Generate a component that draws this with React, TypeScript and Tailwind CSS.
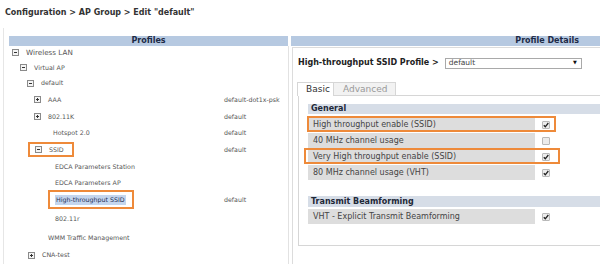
import React from "react";

type TreeRow = {
  label: string;
  h: string;
  pl: string;
  icon?: "minus" | "plus";
  value?: string;
  selected?: boolean;
  box?: string;
};

const rows: TreeRow[] = [
  { label: "Wireless LAN", h: "h-[14px]", pl: "pl-[3px]", icon: "minus" },
  { label: "Virtual AP", h: "h-[15px]", pl: "pl-[11px]", icon: "minus" },
  { label: "default", h: "h-[16px]", pl: "pl-[18px]", icon: "minus" },
  { label: "AAA", h: "h-[17px]", pl: "pl-[25px]", icon: "plus", value: "default-dot1x-psk" },
  { label: "802.11K", h: "h-[17px]", pl: "pl-[25px]", icon: "plus", value: "default" },
  { label: "Hotspot 2.0", h: "h-[16px]", pl: "pl-[44px]", value: "default" },
  {
    label: "SSID",
    h: "h-[17px]",
    pl: "pl-[26px]",
    icon: "minus",
    value: "default",
    box: "left-[19px] top-[1px] w-[46px] h-[15px]",
  },
  { label: "EDCA Parameters Station", h: "h-[17px]", pl: "pl-[46px]" },
  { label: "EDCA Parameters AP", h: "h-[16px]", pl: "pl-[46px]" },
  {
    label: "High-throughput SSID",
    h: "h-[18px]",
    pl: "pl-[46px]",
    value: "default",
    selected: true,
    box: "left-[39px] top-[-1px] w-[86px] h-[19px]",
  },
  { label: "802.11r", h: "h-[20px]", pl: "pl-[46px]" },
  { label: "WMM Traffic Management", h: "h-[18px]", pl: "pl-[39px]" },
  { label: "CNA-test", h: "h-[16px]", pl: "pl-[19px]", icon: "plus" },
];

function TreeIcon({ kind }: { kind: "minus" | "plus" }) {
  return (
    <span className="relative inline-block w-[7px] h-[7px] border border-[#8a8a8a] bg-[#f4f4f4] mr-[7px] shrink-0">
      <span className="absolute left-[1px] top-[2px] w-[3px] h-px bg-[#333]" />
      {kind === "plus" && <span className="absolute left-[2px] top-[1px] w-px h-[3px] bg-[#333]" />}
    </span>
  );
}

function Check({ checked }: { checked: boolean }) {
  return (
    <span className="inline-flex items-center justify-center w-[8px] h-[8px] border border-[#b9b9b9] bg-[#ececec] rounded-[1px]">
      {checked && (
        <svg width="6" height="6" viewBox="0 0 6 6">
          <path d="M0.8 3.2 L2.3 4.8 L5.3 1" stroke="#222" strokeWidth="1.3" fill="none" />
        </svg>
      )}
    </span>
  );
}

function DetailRow({
  label,
  checked,
  box,
}: {
  label: string;
  checked: boolean;
  box?: string;
}) {
  return (
    <div className="relative flex items-center h-[15px] mb-px">
      <div className="w-[227px] h-full bg-[#dddddd] pl-[5px] flex items-center text-[8px] text-[#444] whitespace-nowrap">
        {label}
      </div>
      <div className="ml-[7px] flex items-center">
        <Check checked={checked} />
      </div>
      {box && <div className={`absolute border-2 border-[#ee8a3a] ${box}`} />}
    </div>
  );
}

export default function App() {
  return (
    <div className="w-[600px] h-[264px] bg-white overflow-hidden font-['DejaVu_Sans',sans-serif]">
      <div className="h-[28px] pl-[5px] pt-[7px] text-[8px] font-bold text-[#333] leading-[12px]">
        Configuration &gt; AP Group &gt; Edit "default"
      </div>
      <div className="ml-[3px] border-l border-[#e6e6e6] pl-[5px] pt-[8px] flex h-[236px]">
        {/* Left: Profiles tree */}
        <div className="w-[280px] shrink-0 flex flex-col">
          <div className="h-[10px] mr-[1px] bg-[#b6c9e1] text-[8px] font-bold text-[#1d2b47] leading-[10px] text-center">
            Profiles
          </div>
          <div className="flex-1 border-r border-[#e2e2e2] text-[6.3px] text-[#555]">
            {rows.map((r) => (
              <div key={r.label} className={`relative flex items-center ${r.h}`}>
                <div className={`w-[215px] shrink-0 flex items-center ${r.pl}`}>
                  {r.icon && <TreeIcon kind={r.icon} />}
                  <span
                    className={
                      r.selected
                        ? "bg-[#c4d6ee] text-[#1f2f55] px-px"
                        : r.label === "Wireless LAN"
                        ? "text-[7.2px]"
                        : ""
                    }
                  >
                    {r.label}
                  </span>
                </div>
                {r.value && <span>{r.value}</span>}
                {r.box && <div className={`absolute border-2 border-[#ee8a3a] ${r.box}`} />}
              </div>
            ))}
          </div>
        </div>

        {/* Right: Profile details */}
        <div className="flex-1 ml-[2px] flex flex-col min-w-0">
          <div className="h-[10px] bg-[#b6c9e1] text-[8px] font-bold text-[#1d2b47] leading-[10px] text-right pr-[21px]">
            Profile Details
          </div>
          <div className="flex-1 ml-px mt-px border-l border-t border-[#dcdcdc] pl-[5px]">
            <div className="mt-[10px] flex items-center h-[10px]">
              <span className="text-[8px] font-bold text-[#222] whitespace-nowrap">
                High-throughput SSID Profile &gt;
              </span>
              <div className="ml-[6px] w-[137px] h-[11px] border border-[#a9a9a9] flex items-center justify-between pl-[3px] pr-[4px] text-[7.5px] text-[#444]">
                <span>default</span>
                <span className="text-[5px] text-[#111]">▼</span>
              </div>
            </div>
            <div className="mt-[14px] flex h-[13px] -ml-px">
              <div className="w-[37px] h-[14px] border border-b-0 border-[#d6d6d6] bg-white text-[9px] text-[#333] pl-[8px] leading-[13px] relative z-10">
                Basic
              </div>
              <div className="w-[62px] h-[13px] border-t border-r border-[#d6d6d6] bg-[#f2f2f2] text-[9px] text-[#999] pl-[9px] leading-[13px]">
                Advanced
              </div>
            </div>
            <div className="w-[320px] h-[151px] border-l border-t border-b border-[#d6d6d6] pl-[9px] pt-[8px]">
              <div className="h-[10px] bg-[#d6dde7] text-[8px] font-bold text-[#1e2838] pl-[3px] leading-[10px]">
                General
              </div>
              <div className="mt-[3px]">
                <DetailRow
                  label="High throughput enable (SSID)"
                  checked
                  box="left-[-1px] top-[-1px] w-[249px] h-[16px]"
                />
                <DetailRow label="40 MHz channel usage" checked={false} />
                <DetailRow
                  label="Very High throughput enable (SSID)"
                  checked
                  box="left-[-4px] top-[-1px] w-[256px] h-[16px]"
                />
                <DetailRow label="80 MHz channel usage (VHT)" checked />
              </div>
              <div className="mt-[16px] h-[11px] bg-[#d6dde7] text-[8px] font-bold text-[#1e2838] pl-[3px] leading-[11px]">
                Transmit Beamforming
              </div>
              <div className="mt-[2px]">
                <DetailRow label="VHT - Explicit Transmit Beamforming" checked />
              </div>
            </div>
          </div>
        </div>
      </div>
    </div>
  );
}
